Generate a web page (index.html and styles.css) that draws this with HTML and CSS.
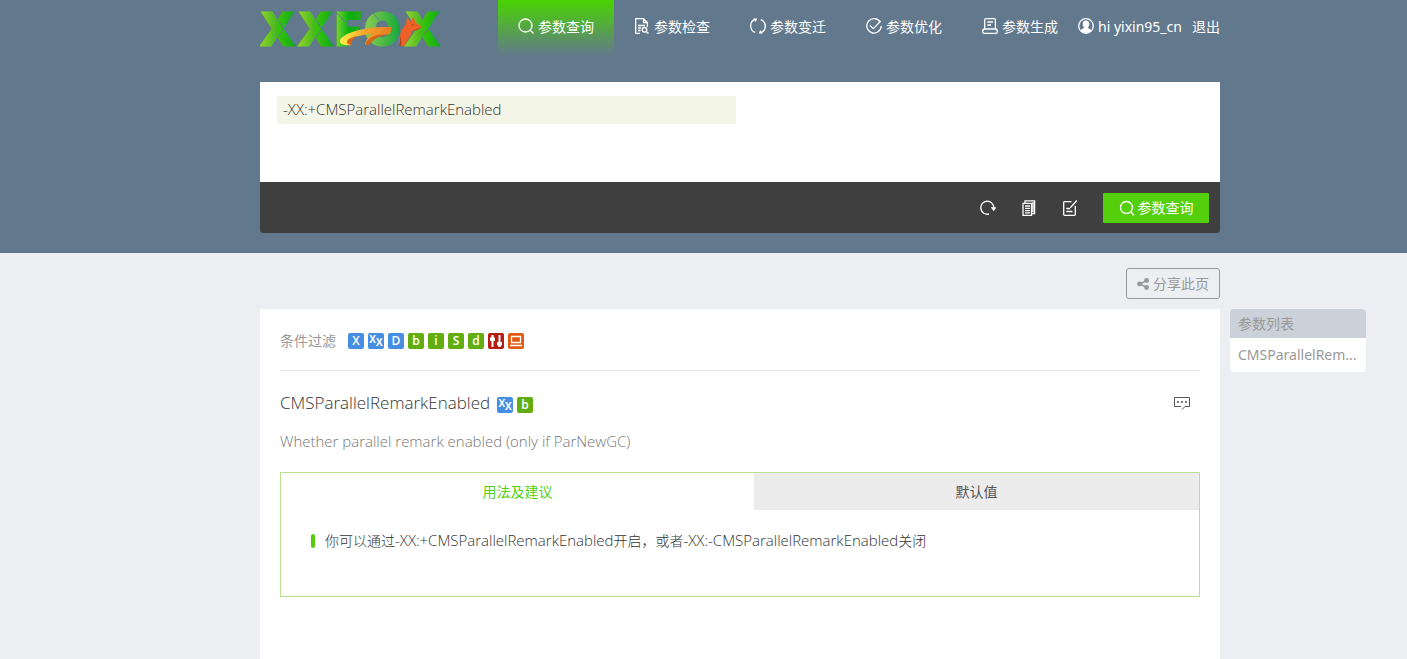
FILE: index.html
```html
<!DOCTYPE html>
<html lang="zh-CN">
<head>
<meta charset="utf-8">
<title>XXFOX - 参数查询</title>
<link rel="stylesheet" href="styles.css">
</head>
<body>
<header class="header">
  <div class="topbar">
    <a class="logo" href="#" aria-label="XXFOX">
      <svg width="184" height="60" viewBox="0 -8 184 60">
        <defs>
          <linearGradient id="leaf"><stop offset="0" stop-color="#9bd52f"/><stop offset=".48" stop-color="#45b81c"/><stop offset=".52" stop-color="#35c40b"/><stop offset="1" stop-color="#12a913"/></linearGradient>
          <linearGradient id="eff"><stop offset="0" stop-color="#86d83b"/><stop offset=".5" stop-color="#08b20b"/><stop offset="1" stop-color="#2ba51f"/></linearGradient>
          <linearGradient id="ring"><stop offset="0" stop-color="#8fcd52"/><stop offset="1" stop-color="#14a83a"/></linearGradient>
          <linearGradient id="tail"><stop offset="0" stop-color="#fff04a"/><stop offset=".5" stop-color="#f4a32b"/><stop offset="1" stop-color="#e67b22"/></linearGradient>
        </defs>
        <g class="logo-letters">
          <text x="-1" y="38" fill="url(#leaf)" stroke="url(#leaf)">X</text>
          <text x="37" y="38" fill="url(#leaf)" stroke="url(#leaf)">X</text>
          <text x="75" y="38" fill="url(#eff)" stroke="url(#eff)">F</text>
          <text x="104" y="38" fill="url(#ring)" stroke="url(#ring)">O</text>
          <text x="144" y="38" fill="url(#leaf)" stroke="url(#leaf)">X</text>
        </g>
        <path d="M18 12L24 21L18 29M56 12L62 21L56 29M76 4L86 15M113 5L119 12M163 27L169 21" fill="none" stroke="#62788c"/>
        <path d="M92 37C84 38 79 36 80 32C84 24 107 18 132 19L130 26C123 27 117 28 113 31L108 37H105C106 32 109 28 113 26C97 27 87 31 88 34Q89 36 92 37Z" fill="url(#tail)"/>
        <path d="M88 36Q84 31 97 28Q91 32 91 37ZM105 37Q108 29 117 27L130 26Q115 28 109 37Z" fill="#d4651b"/>
        <path d="M139 38C140 31 139 25 143 20L146 16L147 9L151 14L153 9L156 15L162 19L157 22L152 23Q151 28 147 33L144 38Z" fill="#ed6127"/>
        <path d="M139 38Q141 33 140 27Q142 32 141 38ZM151 17L154 16L153 18ZM157 21L162 19L157 22L152 23Z" fill="#a94216"/>
      </svg>
    </a>
    <nav class="nav">
      <a class="nav-item active" href="#"><svg class="icon" viewBox="0 0 16 16"><circle cx="7.5" cy="7.5" r="6.5"/><path d="M12 12L15.5 15.5"/></svg>参数查询</a>
      <a class="nav-item" href="#"><svg class="icon" viewBox="0 0 16 16"><path d="M6 15.4H1.7V.6H9.5L13.4 4.5V9M9.5 .6V4.5H13.4M4 7.5H11M4 10H7M4 12.5H6.5"/><circle cx="10.5" cy="11.8" r="2.3"/><path d="M12.2 13.5L14.5 15.6"/></svg>参数检查</a>
      <a class="nav-item" href="#"><svg class="icon" viewBox="0 0 16 16"><path d="M5.5 1.2A7 7 0 0 0 5.2 14.4M10.5 14.8A7 7 0 0 0 10.8 1.6"/><path class="solid" d="M3.4 .5L7.2 .5L5.8 3.9ZM12.6 15.5L8.8 15.5L10.2 12.1Z"/></svg>参数变迁</a>
      <a class="nav-item" href="#"><svg class="icon" viewBox="0 0 16 16"><path d="M14.2 4.2A7.2 7.2 0 1 0 15.2 8M4 7.5L7.3 10.7L14.8 3"/></svg>参数优化</a>
      <a class="nav-item" href="#"><svg class="icon" viewBox="0 0 16 16"><path d="M2.7 11V2Q2.7 .7 4 .7H12Q13.4 .7 13.4 2V11M5.4 4H11M5.4 7H9M2.7 11H13.4Q15.3 11 15.3 13.2T13.8 15.3H2.2Q.7 15.3 .7 13.2T2.7 11Z"/></svg>参数生成</a>
    </nav>
    <div class="user">
      <svg class="icon" viewBox="0 0 16 16"><circle cx="8" cy="8" r="7.3"/><path class="solid" d="M8 2.5C5.7 2.5 4.5 4 4.7 6.2C4.9 8 5.6 9 6.2 9.6C5.8 10.9 3.7 11 2.4 12.3Q5 15.2 8 15.2T13.6 12.3C12.3 11 10.2 10.9 9.8 9.6C10.4 9 11.1 8 11.3 6.2C11.5 4 10.3 2.5 8 2.5Z"/></svg>
      <span>hi yixin95_cn</span>
      <a class="logout" href="#">退出</a>
    </div>
  </div>
  <form class="query">
    <div class="query-body"><input class="query-input latin" type="text" aria-label="参数" value="-XX:+CMSParallelRemarkEnabled"></div>
    <div class="query-bar">
      <button class="tool" type="button" aria-label="重置"><svg class="icon" viewBox="0 0 16 16"><path d="M9 14A6.5 6.5 0 1 1 13.8 8"/><path class="solid" d="M10.8 7.2H16.6L13.7 11.2Z"/></svg></button>
      <button class="tool" type="button" aria-label="复制"><svg class="icon" viewBox="0 0 16 16"><path d="M2 3.4H10.5V15.3H2ZM4 3V.8H13.6V13.5H11M4 6H9M4 8.3H9M4 10.6H9M4 12.9H9M12 2V12"/></svg></button>
      <button class="tool" type="button" aria-label="编辑"><svg class="icon" viewBox="0 0 16 16"><path d="M9.5 1.7H2.5Q1.7 1.7 1.7 2.5V14.5Q1.7 15.3 2.5 15.3H12.5Q13.3 15.3 13.3 14.5V6M4.3 8.5H8M4.3 11.5H10.5M14.8 .5L8.4 7.8"/></svg></button>
      <button class="submit" type="button"><svg class="icon" viewBox="0 0 16 16"><circle cx="7.5" cy="7.5" r="6"/><path d="M12 12L15 15.5"/></svg>参数查询</button>
    </div>
  </form>
</header>
<div class="share-row">
  <button class="share" type="button"><svg class="share-icon" viewBox="0 0 12 12"><path d="M9.5 2.5L3 6L9.5 9.5" fill="none" stroke="currentColor" stroke-width="1.5"/><circle cx="9.6" cy="2.5" r="2.4"/><circle cx="2.5" cy="6" r="2.4"/><circle cx="9.6" cy="9.5" r="2.4"/></svg>分享此页</button>
</div>
<div class="content">
  <main class="panel">
    <div class="filter">
      <span class="filter-label">条件过滤</span>
      <button class="badge blue" type="button">X</button>
      <button class="badge blue pair" type="button"><span>X</span><sub>X</sub></button>
      <button class="badge blue" type="button">D</button>
      <button class="badge green" type="button">b</button>
      <button class="badge green" type="button">i</button>
      <button class="badge green" type="button">S</button>
      <button class="badge green" type="button">d</button>
      <button class="badge red" type="button" aria-label="可调"><svg width="16" height="16" viewBox="0 0 16 16"><path d="M4.5 2V14M11.5 2V14" stroke="#fff" stroke-width="2"/><path d="M2 5L4.5 3L7 5V8H2ZM9 9H14V12L11.5 14L9 12Z" fill="#fff"/></svg></button>
      <button class="badge orange" type="button" aria-label="平台"><svg width="16" height="16" viewBox="0 0 16 16"><path d="M3.5 3.5H12.5V9.5H3.5ZM2 12.5H14" fill="none" stroke="#fff" stroke-width="1.3"/></svg></button>
    </div>
    <article class="param">
      <div class="param-head">
        <h1 class="param-name">CMSParallelRemarkEnabled</h1>
        <span class="badge blue pair"><span>X</span><sub>X</sub></span>
        <span class="badge green">b</span>
        <button class="comment" type="button" aria-label="评论"><svg width="18" height="16" viewBox="0 0 18 16"><path d="M8 11.5H1.5V2.5H16.5V11.5H12L9 14.5" fill="none" stroke="#555"/><path d="M4 7H6M8 7H10M12 7H14" stroke="#555" stroke-width="1.5"/></svg></button>
      </div>
      <p class="param-desc latin">Whether parallel remark enabled (only if ParNewGC)</p>
      <section class="usage">
        <div class="tabs" role="tablist">
          <button class="tab selected" type="button" role="tab" aria-selected="true">用法及建议</button>
          <button class="tab other" type="button" role="tab" aria-selected="false">默认值</button>
        </div>
        <ul class="tips"><li class="tip"><p>你可以通过<span class="latin">-XX:+CMSParallelRemarkEnabled</span>开启，或者<span class="latin">-XX:-CMSParallelRemarkEnabled</span>关闭</p></li></ul>
      </section>
    </article>
  </main>
  <aside class="side">
    <h2 class="side-title">参数列表</h2>
    <a class="side-link" href="#">CMSParallelRem...</a>
  </aside>
</div>
</body>
</html>
```
FILE: styles.css
```css
* { box-sizing: border-box; }
html { height: 100%; }
body {
  display: flex;
  flex-direction: column;
  min-height: 100%;
  margin: 0;
  background: #edeef2;
  color: #555;
  font: 14px/20px "Noto Sans", "Noto Sans CJK SC", sans-serif;
}
a { color: inherit; text-decoration: none; }
button { margin: 0; padding: 0; border: 0; background: none; color: inherit; font: inherit; cursor: pointer; }
h1, h2, p, ul { margin: 0; padding: 0; font-weight: inherit; }
.latin { font-family: "Open Sans", sans-serif; font-size: 15px; font-weight: 300; }

.header, .share-row { padding: 0 187px 0 260px; }
.header { padding-bottom: 20px; background: #62788c; color: #fff; }
.topbar { display: flex; height: 82px; }
.logo-letters { font: 900 47px Inter, sans-serif; stroke-width: 1; }
.nav { display: flex; margin-left: auto; }
.nav-item { display: flex; justify-content: center; gap: 4px; width: 116px; height: 56px; padding-top: 17px; }
.active { background: linear-gradient(#48d400, #62788c); }
.icon { flex: none; width: 16px; height: 16px; margin-top: 1px; fill: none; stroke: currentColor; stroke-width: 1.3; }
.icon .solid { fill: currentColor; stroke: none; }
.user { display: flex; gap: 4px; width: 142px; padding-top: 17px; white-space: nowrap; }
.logout { margin-left: auto; }

.query-body { height: 100px; padding: 14px 17px; background: #fff; }
.query-input { display: block; width: 459px; height: 28px; padding: 0 6px 2px; border: 0; border-radius: 2px; background: #f3f5e6; color: #333; }
.query-bar { display: flex; justify-content: flex-end; align-items: center; gap: 25px; height: 51px; padding-right: 11px; border-radius: 0 0 3px 3px; background: #3f3f3f; }
.tool { display: flex; }
.submit { display: flex; justify-content: center; align-items: center; gap: 3px; width: 106px; height: 30px; border-radius: 1px; background: #55cf0b; }

.share-row { display: flex; justify-content: flex-end; padding-top: 15px; padding-bottom: 10px; }
.share { display: flex; justify-content: center; align-items: center; gap: 4px; width: 94px; height: 31px; border: 1px solid #999; border-radius: 3px; color: #999; }
.share-icon { width: 12px; height: 12px; fill: currentColor; }

.content { display: flex; flex: 1; align-items: stretch; gap: 10px; padding: 0 41px 0 260px; }
.panel { flex: 1; min-width: 0; padding: 0 20px; background: #fff; }
.filter { display: flex; align-items: center; gap: 4px; height: 62px; border-bottom: 1px solid #ebebeb; padding-top: 2px; }
.filter-label { margin-right: 8px; color: #999; }
.badge { display: flex; flex: none; justify-content: center; align-items: center; width: 16px; height: 16px; border-radius: 2px; color: #fff; font: 600 12px/16px "Open Sans", sans-serif; }
.blue { background: #468ee2; }
.green { background: #62ad10; }
.red { background: #b51c12; }
.orange { background: #e15a11; }
.pair { font-weight: 700; font-size: 10px; line-height: 12px; }
.pair span { align-self: flex-start; }
.pair sub { align-self: flex-end; font-size: 10px; line-height: 14px; }

.param-head { display: flex; align-items: center; gap: 4px; padding-top: 20px; }
.param-name { margin-right: 3px; color: #333; font: 300 17px/24px "Open Sans", sans-serif; }
.param-head .badge { margin-top: 4px; }
.comment { display: flex; margin-left: auto; margin-right: 9px; }
.param-desc { margin-top: 15px; color: #777; line-height: 22px; }
.usage { min-height: 125px; margin-top: 20px; border: 1px solid #b9e08e; }
.tabs { display: flex; height: 37px; }
.tab { flex: 473 1 0; color: #55cf0b; }
.other { flex-grow: 445; background: #ececec; color: #555; }
.tips { padding: 20px 30px; color: #333; font-weight: 300; list-style: none; }
.tip { display: flex; align-items: center; gap: 10px; }
.tip::before { content: ""; width: 4px; height: 14px; border-radius: 2px; background: #55cf0b; }

.side { align-self: flex-start; width: 136px; border-radius: 4px; overflow: hidden; background: #fff; color: #999; }
.side-title { padding: 0 8px; background: #cad1d8; font-size: 14px; line-height: 29px; }
.side-link { display: block; padding: 0 8px; line-height: 34px; white-space: nowrap; }
```
